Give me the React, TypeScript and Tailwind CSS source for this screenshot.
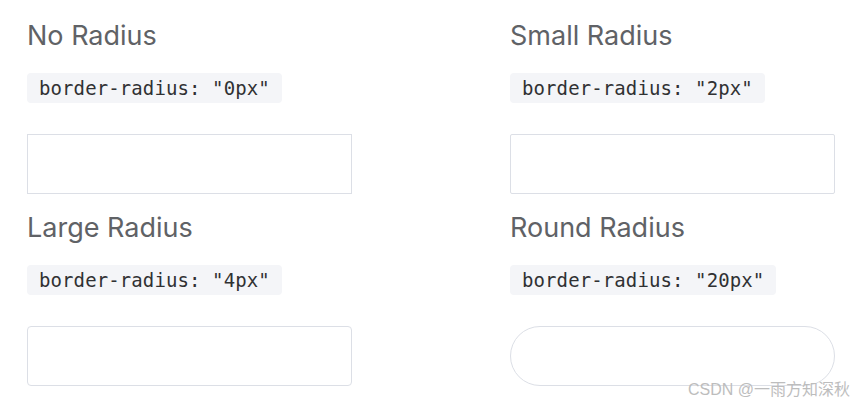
const items = [
  { title: "No Radius", value: "0px", box: "rounded-none" },
  { title: "Small Radius", value: "2px", box: "rounded-[2px]" },
  { title: "Large Radius", value: "4px", box: "rounded-[4px]" },
  { title: "Round Radius", value: "20px", box: "rounded-[30px]" },
];

const App = () => {
  return (
    <div className="relative w-[854px] h-[406px] overflow-hidden bg-white">
      <div className="grid grid-cols-[483px_483px] gap-y-[18px] pl-[27px] pt-[20px]">
        {items.map((item) => (
          <div key={item.title} className="flex flex-col">
            <h2 className="text-[27px] leading-[32px] text-[#606266] font-['Inter',sans-serif]">
              {item.title}
            </h2>
            <div className="mt-[21px]">
              <code className="inline-block h-[30px] leading-[30px] px-[12px] rounded-[4px] bg-[#f4f5f8] text-[#303133] text-[19px] tracking-[0.1px] font-['DejaVu_Sans_Mono',monospace]">
                border-radius: "{item.value}"
              </code>
            </div>
            <div
              className={`mt-[31px] w-[325px] h-[60px] border border-[#dcdfe6] bg-white ${item.box}`}
            />
          </div>
        ))}
      </div>
      <div className="absolute right-[4px] bottom-[4px] text-[16px] text-[#bdbdbd] font-['Liberation_Sans','Noto_Sans_CJK_SC',sans-serif]">
        CSDN @一雨方知深秋
      </div>
    </div>
  );
};

export default App;
